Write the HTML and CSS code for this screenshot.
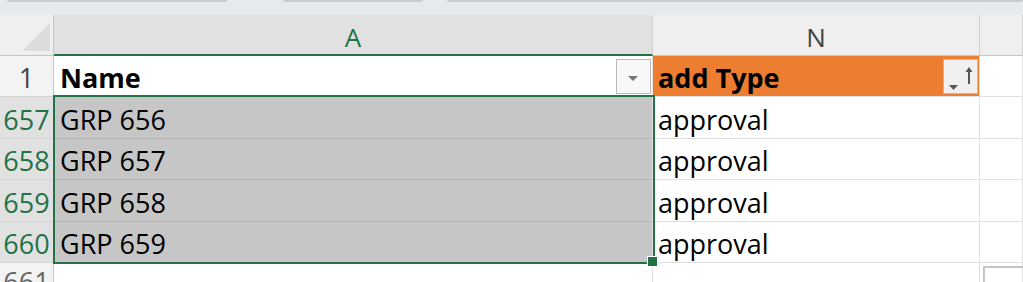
FILE: index.html
```html
<!DOCTYPE html>
<html>
<head>
    <title>Sheet</title>
    <meta name="viewport" content="width=device-width, initial-scale=1.0">
    <link rel="stylesheet" href="styles.css">
</head>
<body>
    <div class="tabs">
        <span class="tab t1"></span>
        <span class="tab t2"></span>
        <span class="tab t3"></span>
    </div>
    <div class="sheet">
        <!-- column headers -->
        <div class="corner">
            <svg width="54" height="41" viewBox="0 0 54 41">
                <polygon points="50,8 50,36 22,36" fill="#dcdcdc"/>
            </svg>
        </div>
        <div class="col-head sel">A</div>
        <div class="col-head">N</div>
        <div class="col-head"></div>

        <!-- row 1 -->
        <div class="row-head">1</div>
        <div class="cell head-cell">
            <span>Name</span>
            <span class="filter">
                <svg width="33" height="33" viewBox="0 0 33 33">
                    <polygon points="11,16 21,16 16,21" fill="#767676"/>
                </svg>
            </span>
        </div>
        <div class="cell head-cell orange">
            <span>add Type</span>
            <span class="filter">
                <svg width="33" height="33" viewBox="0 0 33 33">
                    <polygon points="5,25 14,25 9.5,30" fill="#555"/>
                    <path d="M25 9v15" stroke="#555" stroke-width="2"/>
                    <polygon points="21.5,12 28.5,12 25,7" fill="#555"/>
                </svg>
            </span>
        </div>
        <div class="cell"></div>

        <div class="row-head sel">657</div>
        <div class="cell grey">GRP 656</div>
        <div class="cell">approval</div>
        <div class="cell"></div>

        <div class="row-head sel">658</div>
        <div class="cell grey">GRP 657</div>
        <div class="cell">approval</div>
        <div class="cell"></div>

        <div class="row-head sel">659</div>
        <div class="cell grey">GRP 658</div>
        <div class="cell">approval</div>
        <div class="cell"></div>

        <div class="row-head sel">660</div>
        <div class="cell grey">GRP 659</div>
        <div class="cell">approval</div>
        <div class="cell"></div>

        <div class="row-head last">661</div>
        <div class="cell"></div>
        <div class="cell"></div>
        <div class="cell"><span class="paste-box"></span></div>

        <div class="selection"></div>
        <div class="handle"></div>
    </div>
</body>
</html>
```

FILE: styles.css
```css
body {
    margin: 0;
    width: 1023px;
    height: 282px;
    overflow: hidden;
    background: #ffffff;
    font-family: 'Open Sans', 'Liberation Sans', sans-serif;
    font-size: 27px;
    color: #000;
}

.tabs {
    height: 15px;
    background: #e6eaee;
    display: flex;
    align-items: flex-start;
}

.tab {
    height: 2px;
    background: #c9cbcd;
    border-radius: 0 0 2px 2px;
}

.t1 { margin-left: 7px; width: 220px; }
.t2 { margin-left: 56px; width: 140px; }
.t3 { margin-left: 24px; flex: 1; }

.sheet {
    position: relative;
    display: grid;
    grid-template-columns: 54px 599px 327px 1fr;
    grid-template-rows: 41px 41px 42px 41px 42px 41px 40px;
}

.corner {
    background: #efefef;
    border-right: 1px solid #c6c6c6;
    border-bottom: 1px solid #c6c6c6;
    box-sizing: border-box;
}

.corner svg {
    display: block;
}

.col-head {
    background: #efefef;
    border-right: 1px solid #d0d0d0;
    border-bottom: 1px solid #c6c6c6;
    box-sizing: border-box;
    display: flex;
    align-items: flex-end;
    justify-content: center;
    padding-bottom: 5px;
    color: #444;
    line-height: 26px;
    font-size: 26px;
}

.col-head.sel {
    background: #e1e1e1;
    color: #217346;
    border-bottom: 2px solid #217346;
    padding-bottom: 4px;
}

.row-head {
    background: #f3f3f3;
    border-right: 1px solid #c6c6c6;
    border-bottom: 1px solid #d4d4d4;
    box-sizing: border-box;
    display: flex;
    align-items: flex-end;
    justify-content: center;
    padding-bottom: 5px;
    color: #444;
    line-height: 26px;
}

.row-head.sel {
    background: #e1e1e1;
    color: #217346;
}

.row-head.last {
    align-items: flex-start;
    padding-top: 6px;
    color: #666;
}

.cell {
    border-right: 1px solid #e1e1e1;
    border-bottom: 1px solid #e1e1e1;
    box-sizing: border-box;
    display: flex;
    align-items: flex-end;
    padding: 0 0 5px 5px;
    line-height: 26px;
    position: relative;
}

.cell.grey {
    background: #c6c6c6;
    border-bottom-color: #b4b4b4;
    padding-left: 6px;
}

.head-cell {
    font-weight: bold;
    justify-content: space-between;
    padding-left: 6px;
}

.head-cell.orange {
    background: #ed7d31;
    padding-left: 5px;
}

.filter {
    position: absolute;
    right: 1px;
    top: 3px;
    width: 35px;
    height: 35px;
    box-sizing: border-box;
    border: 1px solid #b9b9b9;
    background: #f8f8f8;
}

.orange .filter {
    background: #f0f0f0;
}

.filter svg {
    display: block;
}

.paste-box {
    position: absolute;
    left: 3px;
    top: 3px;
    width: 40px;
    height: 20px;
    box-sizing: border-box;
    border: 2px solid #c6c6c6;
    border-right: none;
    border-bottom: none;
}

.selection {
    position: absolute;
    left: 53px;
    top: 80px;
    width: 602px;
    height: 169px;
    box-sizing: border-box;
    border: 2px solid #217346;
    pointer-events: none;
}

.handle {
    position: absolute;
    left: 648px;
    top: 242px;
    width: 9px;
    height: 9px;
    box-sizing: border-box;
    background: #217346;
    outline: 1px solid #ffffff;
}
```
